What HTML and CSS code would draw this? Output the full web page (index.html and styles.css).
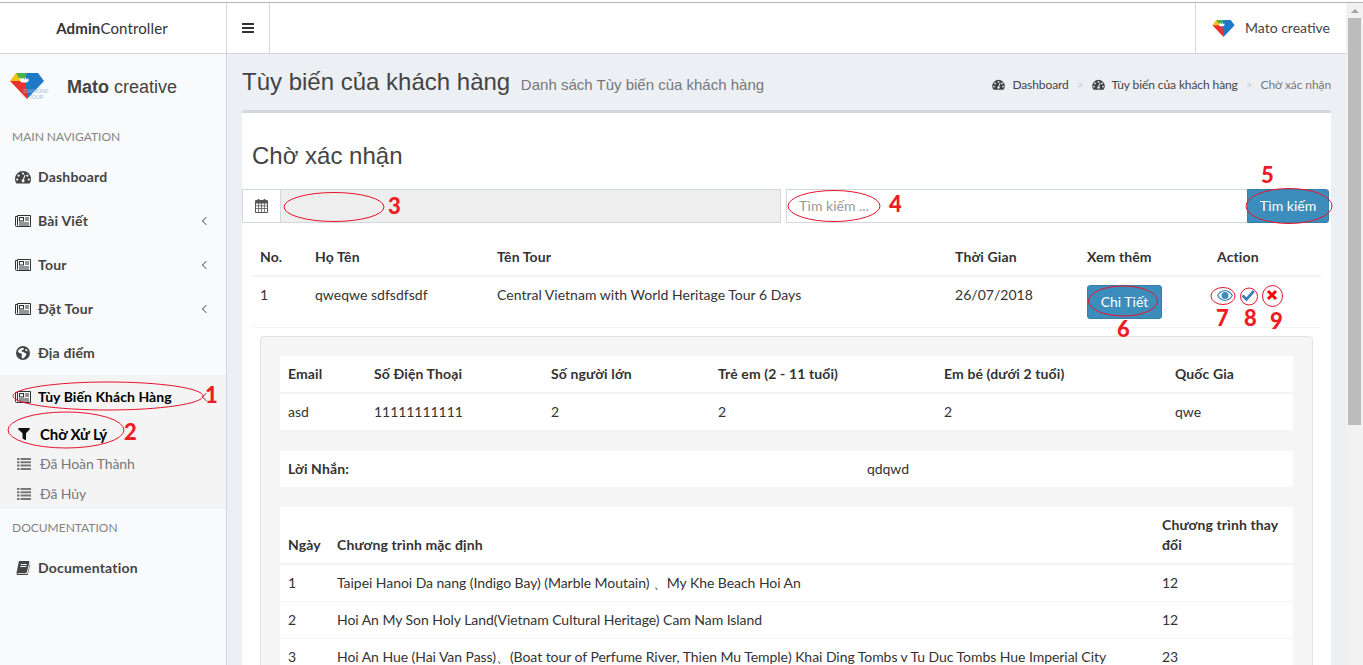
FILE: index.html
```html
<!DOCTYPE html>
<html lang="vi">
  <head>
    <meta charset="UTF-8" />
    <title>Tùy biến của khách hàng</title>
    <link rel="stylesheet" href="styles.css">
  </head>
  <body>
    <svg class="defs" width="0" height="0">
      <symbol id="i-dash" viewBox="0 0 16 14"><path fill-rule="evenodd" d="M8 1a8 8 0 0 0-8 8c0 1.6.4 3 1.2 4.2.2.3.4.4.7.4h12.200c.3 0 .5-.1.7-.4C15.600 12 16 10.600 16 9a8 8 0 0 0-8-8zM8 2.500a1.100 1.100 0 1 1 0 2.200 1.100 1.100 0 0 1 0-2.200zM3.600 4.600a1.100 1.100 0 1 1 0 2.200 1.100 1.100 0 0 1 0-2.200zM2.200 8.500a1.100 1.100 0 1 1 0 2.200 1.100 1.100 0 0 1 0-2.200zM13.800 8.500a1.100 1.100 0 1 1 0 2.200 1.100 1.100 0 0 1 0-2.200zM12.400 4.600a1.100 1.100 0 1 1 0 2.200 1.100 1.100 0 0 1 0-2.200zM10.400 5.300 9 9.600a1.500 1.500 0 1 1-1.100-.3l1.500-4.300c.3-.6 1.200-.3 1 .3z"/></symbol>
      <symbol id="i-news" viewBox="0 0 16 12">
        <g fill="none" stroke="#333" stroke-width="1">
          <path d="M2.500 1.500V.5h13v11H1.500a1 1 0 0 1-1-1V1.500z" />
          <path d="M2.500 1.500v9" />
          <rect x="4.500" y="2.500" width="4" height="3.500" />
          <path d="M10 3h4M10 5h4M4 8h10M4 10h10" />
        </g>
      </symbol>
      <symbol id="i-globe" viewBox="0 0 14 14"><path fill-rule="evenodd" d="M7 0a7 7 0 1 0 0 14A7 7 0 0 0 7 0zM5.500 2 4 3 2.600 3.500 2 6l1.500 1 1.500.2 1 1.300L5.500 11l1 1.500 1.500-.5 1.500-2 1-1.500-1-1.500L8 6.500 7 5.500 6 6 5.500 5l1-1 1-.5.500-1.500zM10 2.700 9 4l1 1 1.800.3c-.3-1.100-1-2-1.800-2.600z"/></symbol>
      <symbol id="i-filter" viewBox="0 0 12 12"><path d="M.2 .6C.3.200.6 0 1 0h10c.4 0 .7.200.8.600.1.300.1.700-.2.900L8 5.200V11c0 .4-.2.700-.5.900l-.4.100c-.2 0-.4-.1-.5-.2L4.700 10.500c-.2-.1-.2-.3-.2-.5V5.200L.4 1.500C.1 1.300.1.900.2.600z"/></symbol>
      <symbol id="i-list" viewBox="0 0 14 12"><path d="M0 0h2.500v2H0zM3.500 0H14v2H3.500zM0 3.300h2.500v2H0zM3.500 3.300H14v2H3.500zM0 6.600h2.500v2H0zM3.500 6.600H14v2H3.500zM0 9.900h2.500v2H0zM3.500 9.900H14v2H3.500z"/></symbol>
      <symbol id="i-book" viewBox="0 0 13 14"><path fill-rule="evenodd" d="M3.200 0h8.600c.8 0 1.200.6 1 1.400l-2.400 9.600c-.2.700-.7 1.200-1.500 1.200H1.600c-.4 0-.6.200-.6.400 0 .3.200.4.600.4h8.800c.3 0 .5-.2.600-.4l2.300-9.300c.3.200.4.500.3.900l-2.300 9.300c-.2.700-.8 1.500-1.500 1.500H1.800C.9 14 0 13.200 0 12.200c0-.3 0-.5.100-.8L2.200 1.200C2.400.5 2.600 0 3.200 0zM4.400 3l-.2 1h6l.2-1zM3.900 5l-.2 1h6l.2-1z"/></symbol>
      <symbol id="i-cal" viewBox="0 0 13 14"><path fill-rule="evenodd" d="M3 0h1c.3 0 .5.200.5.500V1h4V.5c0-.3.200-.5.500-.5h1c.3 0 .5.200.5.500V1h1.200c.7 0 1.300.6 1.300 1.300v10.400c0 .7-.6 1.300-1.300 1.300H1.300C.6 14 0 13.400 0 12.700V2.300C0 1.600.6 1 1.300 1h1.200V.5c0-.3.200-.5.500-.5zM1 4.500v2h2.300v-2zM4.100 4.500v2h2v-2zM6.900 4.500v2h2v-2zM9.700 4.500v2H12v-2zM1 7.200v2h2.300v-2zM4.100 7.200v2h2v-2zM6.900 7.200v2h2v-2zM9.700 7.200v2H12v-2zM1 10v2.700c0 .2.100.3.300.3h2v-3zM4.100 10v3h2v-3zM6.900 10v3h2v-3zM9.700 10v3h2c.2 0 .3-.1.300-.3V10z"/></symbol>
      <symbol id="i-logo" viewBox="0 0 34 26">
        <polygon fill="#1d78c8" points="15,0 28,0 34,8 17,26 14,8" />
        <polygon fill="#4bb050" points="6,0 17,0 15,6 8,5" />
        <polygon fill="#f4c20d" points="0,8 6,0 9,5 11,9" />
        <polygon fill="#e8312f" points="0,8 11,8 15,9 17,18 17,26" />
        <path fill="#fff" d="M10 8l.5-2.500 1.500 1.500 1-2.500 1.200 2.200L15.500 4l1 2.500 1.700-1.500.5 3-2 1.500h-5z" />
      </symbol>
    </svg>

    <div class="shell">
      <div class="page">
        <header class="topbar">
          <div class="brand"><b>Admin</b>Controller</div>
          <div class="toggle">
            <svg class="bars" viewBox="0 0 12 10"><path d="M0 0h12v2H0zM0 4h12v2H0zM0 8h12v2H0z" /></svg>
          </div>
          <div class="topbar-fill"></div>
          <div class="user">
            <svg class="user-logo"><use href="#i-logo" /></svg>
            <span>Mato creative</span>
          </div>
        </header>

        <div class="body-row">
          <aside class="sidebar">
            <div class="panel">
              <div class="panel-logo">
                <svg class="panel-diamond"><use href="#i-logo" /></svg>
                <span class="panel-tag">DIAMOND<br />TOUR</span>
              </div>
              <p class="panel-name"><b>Mato</b> creative</p>
            </div>
            <h4 class="nav-head">MAIN NAVIGATION</h4>
            <ul class="nav">
              <li><a class="nav-link"><svg class="ico"><use href="#i-dash" /></svg>Dashboard</a></li>
              <li><a class="nav-link"><svg class="ico"><use href="#i-news" /></svg>Bài Viết<i class="caret"></i></a></li>
              <li><a class="nav-link"><svg class="ico"><use href="#i-news" /></svg>Tour<i class="caret"></i></a></li>
              <li><a class="nav-link"><svg class="ico"><use href="#i-news" /></svg>Đặt Tour<i class="caret"></i></a></li>
              <li><a class="nav-link"><svg class="ico"><use href="#i-globe" /></svg>Địa điểm</a></li>
              <li class="open">
                <a class="nav-link current"><svg class="ico"><use href="#i-news" /></svg>Tùy Biến Khách Hàng<i class="caret"></i></a>
                <ul class="subnav">
                  <li class="sub-on"><svg class="sub-ico"><use href="#i-filter" /></svg>Chờ Xử Lý</li>
                  <li><svg class="sub-ico"><use href="#i-list" /></svg>Đã Hoàn Thành</li>
                  <li><svg class="sub-ico"><use href="#i-list" /></svg>Đã Hủy</li>
                </ul>
              </li>
            </ul>
            <h4 class="nav-head doc-head">DOCUMENTATION</h4>
            <a class="nav-link"><svg class="ico"><use href="#i-book" /></svg>Documentation</a>
          </aside>

          <main class="content">
            <div class="content-head">
              <h1>Tùy biến của khách hàng <small>Danh sách Tùy biến của khách hàng</small></h1>
              <ol class="crumbs">
                <li><svg class="crumb-ico"><use href="#i-dash" /></svg>Dashboard</li>
                <li><svg class="crumb-ico"><use href="#i-dash" /></svg>Tùy biến của khách hàng</li>
                <li class="crumb-last">Chờ xác nhận</li>
              </ol>
            </div>

            <section class="box">
              <h2 class="box-title">Chờ xác nhận</h2>
              <div class="filters">
                <div class="date-group">
                  <span class="addon"><svg class="cal"><use href="#i-cal" /></svg></span>
                  <div class="date-input"></div>
                </div>
                <div class="search-group">
                  <div class="search-input">Tìm kiếm ...</div>
                  <button class="btn btn-search">Tìm kiếm</button>
                </div>
              </div>

              <table class="tbl tbl-main">
                <colgroup><col class="m1" /><col class="m2" /><col class="m3" /><col class="m4" /><col class="m5" /><col class="m6" /></colgroup>
                <thead>
                  <tr><th>No.</th><th>Họ Tên</th><th>Tên Tour</th><th>Thời Gian</th><th>Xem thêm</th><th>Action</th></tr>
                </thead>
                <tbody>
                  <tr>
                    <td>1</td>
                    <td>qweqwe sdfsdfsdf</td>
                    <td>Central Vietnam with World Heritage Tour 6 Days</td>
                    <td>26/07/2018</td>
                    <td><button class="btn btn-detail">Chi Tiết</button></td>
                    <td>
                      <div class="actions">
                        <svg class="act act-eye" viewBox="0 0 16 11"><path fill="#3c8dbc" fill-rule="evenodd" d="M8 0c3.500 0 6.400 2.200 8 5.500C14.400 8.800 11.500 11 8 11S1.600 8.800 0 5.500C1.600 2.200 4.500 0 8 0zM8 1.200c-2.800 0-5.100 1.700-6.600 4.300C2.900 8.100 5.200 9.800 8 9.800s5.100-1.700 6.600-4.300C13.100 2.900 10.800 1.200 8 1.200zM8 2a3.500 3.500 0 1 1 0 7 3.500 3.500 0 0 1 0-7z" /></svg>
                        <svg class="act act-check" viewBox="0 0 14 12"><path d="M1.500 6.500 5.500 10.300 12.800 2" fill="none" stroke="#3c7fb8" stroke-width="2.800" /></svg>
                        <svg class="act act-times" viewBox="0 0 12 12"><path d="M2 2l8 8M10 2l-8 8" fill="none" stroke="#f00" stroke-width="3" /></svg>
                      </div>
                    </td>
                  </tr>
                </tbody>
              </table>

              <div class="well">
                <table class="tbl tbl-inner">
                  <colgroup><col class="a1" /><col class="a2" /><col class="a3" /><col class="a4" /><col class="a5" /><col class="a6" /></colgroup>
                  <thead>
                    <tr><th>Email</th><th>Số Điện Thoại</th><th>Số người lớn</th><th>Trẻ em (2 - 11 tuổi)</th><th>Em bé (dưới 2 tuổi)</th><th>Quốc Gia</th></tr>
                  </thead>
                  <tbody>
                    <tr><td>asd</td><td>11111111111</td><td>2</td><td>2</td><td>2</td><td>qwe</td></tr>
                  </tbody>
                </table>

                <table class="tbl tbl-inner">
                  <colgroup><col class="b1" /><col class="b2" /></colgroup>
                  <tbody>
                    <tr><th>Lời Nhắn:</th><td>qdqwd</td></tr>
                  </tbody>
                </table>

                <table class="tbl tbl-inner">
                  <colgroup><col class="c1" /><col class="c2" /><col class="c3" /></colgroup>
                  <thead>
                    <tr class="bottom"><th>Ngày</th><th>Chương trình mặc định</th><th>Chương trình thay đổi</th></tr>
                  </thead>
                  <tbody>
                    <tr><td>1</td><td>Taipei Hanoi Da nang (Indigo Bay) (Marble Moutain) 、My Khe Beach Hoi An</td><td>12</td></tr>
                    <tr><td>2</td><td>Hoi An My Son Holy Land(Vietnam Cultural Heritage) Cam Nam Island</td><td>12</td></tr>
                    <tr><td>3</td><td>Hoi An Hue (Hai Van Pass)、(Boat tour of Perfume River, Thien Mu Temple) Khai Ding Tombs v Tu Duc Tombs Hue Imperial City</td><td>23</td></tr>
                  </tbody>
                </table>
              </div>
            </section>
          </main>
        </div>
      </div>

      <div class="scrollbar">
        <span class="scroll-up"></span>
        <span class="scroll-thumb"></span>
      </div>
    </div>

    <!-- red notes drawn over the screenshot -->
    <div class="notes">
      <svg class="rings" width="1363" height="665">
        <ellipse cx="108" cy="396" rx="95" ry="14" />
        <ellipse cx="66" cy="430" rx="58" ry="18" />
        <ellipse cx="334" cy="207" rx="50" ry="14.500" />
        <ellipse cx="834" cy="206" rx="46" ry="15.500" />
        <ellipse cx="1289" cy="206" rx="43" ry="17.500" />
        <ellipse cx="1123" cy="301" rx="34.500" ry="15" />
        <ellipse cx="1223" cy="296" rx="12" ry="8.500" />
        <ellipse cx="1249" cy="296.500" rx="8.500" ry="8.500" />
        <ellipse cx="1272.500" cy="296" rx="10" ry="10.500" />
      </svg>
      <span class="num n1">1</span>
      <span class="num n2">2</span>
      <span class="num n3">3</span>
      <span class="num n4">4</span>
      <span class="num n5">5</span>
      <span class="num n6">6</span>
      <span class="num n7">7</span>
      <span class="num n8">8</span>
      <span class="num n9">9</span>
    </div>
  </body>
</html>
```

FILE: styles.css
```css
* {
  box-sizing: border-box;
}

html,
body {
  height: 100%;
  margin: 0;
  overflow: hidden;
}

body {
  position: relative;
  padding-top: 2px;
  background-color: #fff;
  color: #333;
  font-family: Lato, "Liberation Sans", sans-serif;
  font-size: 14px;
  line-height: 20px;
}

.defs {
  position: absolute;
}

.shell {
  display: flex;
  height: 100%;
  border-top: 1px solid #b4b4b4;
}

.page {
  flex: 1;
  min-width: 0;
  display: flex;
  flex-direction: column;
}

/* TOP BAR */

.topbar {
  display: flex;
  flex: none;
  height: 51px;
  border-bottom: 1px solid #d2d6de;
}

.brand {
  width: 227px;
  padding-right: 2px;
  border-right: 1px solid #d2d6de;
  font-size: 15px;
  letter-spacing: 0.12px;
  line-height: 50px;
  text-align: center;
  color: #333;
}

.toggle {
  width: 43px;
  border-right: 1px solid #d2d6de;
  display: flex;
  align-items: center;
  justify-content: center;
}

.bars {
  width: 12px;
  height: 10px;
  fill: #333;
}

.topbar-fill {
  flex: 1;
}

.user {
  display: flex;
  align-items: center;
  gap: 10px;
  width: 151px;
  padding-left: 16px;
  border-left: 1px solid #d2d6de;
  color: #444;
}

.user-logo {
  width: 23px;
  height: 17px;
}

.body-row {
  flex: 1;
  min-height: 0;
  display: flex;
}

/* SIDEBAR */

.sidebar {
  flex: none;
  width: 227px;
  background-color: #f9fafc;
  border-right: 1px solid #d2d6de;
}

.panel {
  display: flex;
  align-items: center;
  height: 63px;
  padding-left: 10px;
}

.panel-logo {
  position: relative;
  width: 34px;
  height: 26px;
  margin-right: 23px;
}

.panel-diamond {
  display: block;
  width: 34px;
  height: 26px;
}

.panel-tag {
  position: absolute;
  left: 12px;
  top: 15px;
  width: 28px;
  color: #9dbfdd;
  font-size: 5px;
  line-height: 6px;
  text-align: center;
}

.panel-name {
  margin: 3px 0 0;
  color: #444;
  font-family: "Liberation Sans", sans-serif;
  font-size: 18px;
}

.nav-head {
  margin: 0;
  padding: 10px 12px 8px;
  color: #848484;
  font-size: 12px;
  font-weight: 400;
  line-height: 20px;
}

.nav,
.subnav {
  margin: 0;
  padding: 0;
  list-style: none;
}

.nav-link {
  position: relative;
  display: flex;
  align-items: center;
  height: 44px;
  padding-left: 15px;
  color: #444;
  font-weight: 700;
  letter-spacing: 0.2px;
}

.ico {
  width: 16px;
  height: 14px;
  margin-right: 7px;
  fill: #444;
}

.caret {
  position: absolute;
  right: 17px;
  top: 19px;
  width: 6px;
  height: 6px;
  border-left: 1px solid #777;
  border-bottom: 1px solid #777;
  transform: rotate(45deg);
}

.open {
  background-color: #f4f4f5;
}

.current {
  color: #000;
  letter-spacing: 0.06px;
}

.subnav li {
  display: flex;
  align-items: center;
  height: 30px;
  padding-left: 17px;
  color: #777;
  letter-spacing: -0.1px;
}

.subnav .sub-on {
  color: #000;
  font-size: 15px;
  font-weight: 700;
}

.sub-ico {
  width: 14px;
  height: 12px;
  margin-right: 9px;
  fill: #777;
}

.sub-on .sub-ico {
  fill: #111;
}

.doc-head {
  padding-top: 9px;
  padding-bottom: 0;
  height: 37px;
}

/* CONTENT */

.content {
  flex: 1;
  min-width: 0;
  overflow: hidden;
  background-color: #ecf0f5;
  padding: 0 15px;
}

.content-head {
  display: flex;
  justify-content: space-between;
  align-items: center;
  height: 56px;
}

.content-head h1 {
  margin: 0;
  padding-top: 2px;
  color: #444;
  font-family: "Liberation Sans", sans-serif;
  font-size: 24px;
  font-weight: 400;
}

.content-head small {
  margin-left: 4px;
  color: #777;
  font-size: 15px;
}

.crumbs {
  display: flex;
  margin: 0;
  padding: 6px 0 0;
  list-style: none;
  color: #444;
  font-size: 12px;
  letter-spacing: -0.1px;
}

.crumbs li + li::before {
  content: ">";
  margin: 0 8px;
  color: #ccc;
}

.crumb-ico {
  width: 13px;
  height: 11px;
  margin-right: 7px;
  fill: #444;
  vertical-align: -1px;
}

.crumb-last {
  color: #777;
}

.box {
  background-color: #fff;
  border-top: 3px solid #d2d6de;
  border-radius: 3px;
  height: 700px;
}

.box-title {
  margin: 0;
  padding: 29px 10px 0;
  height: 76px;
  color: #444;
  font-family: "Liberation Sans", sans-serif;
  font-size: 24px;
  font-weight: 400;
  line-height: 28px;
}

.filters {
  display: flex;
  gap: 5px;
  padding-right: 2px;
}

.date-group {
  display: flex;
  width: 539px;
  height: 34px;
}

.addon {
  display: flex;
  align-items: center;
  justify-content: center;
  width: 38px;
  border: 1px solid #d2d6de;
  border-right: 0;
}

.cal {
  width: 13px;
  height: 14px;
  fill: #555;
}

.date-input {
  flex: 1;
  background-color: #eee;
  border: 1px solid #d2d6de;
}

.search-group {
  flex: 1;
  display: flex;
  height: 34px;
}

.search-input {
  flex: 1;
  padding: 6px 12px;
  border: 1px solid #d2d6de;
  border-right: 0;
  color: #999;
}

.btn {
  border: 1px solid #367fa9;
  border-radius: 3px;
  background-color: #3c8dbc;
  color: #fff;
  font-family: inherit;
  font-size: 14px;
  line-height: 20px;
}

.btn-search {
  width: 82px;
  border-radius: 0 3px 3px 0;
}

.btn-detail {
  display: block;
  width: 75px;
  height: 34px;
}

/* TABLES */

.tbl {
  width: 100%;
  border-collapse: collapse;
  table-layout: fixed;
  background-color: #fff;
}

.tbl th,
.tbl td {
  padding: 8px;
  text-align: left;
  vertical-align: top;
  border-top: 1px solid #f4f4f4;
}

.tbl th {
  letter-spacing: 0.12px;
}

.tbl td {
  letter-spacing: -0.05px;
}

.tbl thead th {
  border-top: 0;
  border-bottom: 2px solid #f4f4f4;
}

.tbl-main {
  width: 1069px;
  margin: 16px 0 0 10px;
  border-bottom: 1px solid #f4f4f4;
}

.tbl-main td {
  height: 50px;
  letter-spacing: 0.02px;
}

.m1 { width: 55px; }
.m2 { width: 182px; }
.m3 { width: 458px; }
.m4 { width: 132px; }
.m5 { width: 130px; }
.m6 { width: 112px; }

.a1 { width: 86px; }
.a2 { width: 177px; }
.a3 { width: 167px; }
.a4 { width: 226px; }
.a5 { width: 231px; }
.a6 { width: 126px; }

.b1 { width: 579px; }
.b2 { width: 434px; }

.c1 { width: 49px; }
.c2 { width: 825px; }
.c3 { width: 139px; }

.bottom th {
  vertical-align: bottom;
}

.actions {
  display: flex;
  align-items: center;
  padding-top: 4px;
}

.act {
  height: 12px;
}

.act-eye {
  width: 16px;
  height: 11px;
  margin: 0 8px 0 0;
}

.act-check {
  width: 14px;
  margin-right: 11px;
}

.act-times {
  width: 12px;
}

.well {
  width: 1053px;
  margin: 8px 0 0 18px;
  padding: 19px;
  background-color: #f5f5f5;
  border: 1px solid #e3e3e3;
  border-radius: 4px;
}

.tbl-inner + .tbl-inner {
  margin-top: 20px;
}

/* SCROLLBAR */

.scrollbar {
  flex: none;
  width: 17px;
  background-color: #f1f1f1;
  display: flex;
  flex-direction: column;
  align-items: center;
}

.scroll-up {
  margin: 6px 0 5px;
  width: 0;
  height: 0;
  border-left: 4px solid transparent;
  border-right: 4px solid transparent;
  border-bottom: 4px solid #a3a3a3;
}

.scroll-thumb {
  width: 13px;
  height: 407px;
  background-color: #bcbcbc;
}

/* NOTES */

.notes {
  position: absolute;
  inset: 0;
  pointer-events: none;
}

.rings {
  position: absolute;
  left: 0;
  top: 0;
}

.rings ellipse {
  fill: none;
  stroke: #e8132a;
  stroke-width: 1;
}

.num {
  position: absolute;
  color: #ee1c25;
  font-family: Lato, sans-serif;
  font-size: 22px;
  font-weight: 900;
  line-height: 24px;
}

.n1 { left: 205px; top: 383px; }
.n2 { left: 124px; top: 420px; }
.n3 { left: 388px; top: 194px; }
.n4 { left: 889px; top: 192px; }
.n5 { left: 1261px; top: 163px; }
.n6 { left: 1117px; top: 317px; }
.n7 { left: 1216px; top: 306px; }
.n8 { left: 1244px; top: 306px; }
.n9 { left: 1270px; top: 309px; }
```
